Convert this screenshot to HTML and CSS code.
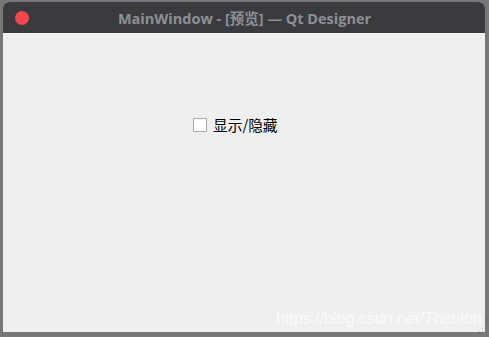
FILE: index.html
```html
<!DOCTYPE html>
<html>
<head>
<meta charset="utf-8">
<link rel="stylesheet" href="styles.css">
</head>
<body>
<div class="window">
  <div class="titlebar">
    <span class="close"></span>
    <span class="title">MainWindow - [预览] — Qt Designer</span>
  </div>
  <div class="content">
    <label class="check">
      <span class="box"></span>
      <span class="label">显示/隐藏</span>
    </label>
    <div class="watermark">https://blog.csdn.net/Thanlon</div>
    <div class="grip">
      <svg width="9" height="9" viewBox="0 0 9 9">
        <g fill="#b8b8b8">
          <rect x="7" y="1" width="1" height="1"/>
          <rect x="4" y="4" width="1" height="1"/><rect x="7" y="4" width="1" height="1"/>
          <rect x="1" y="7" width="1" height="1"/><rect x="4" y="7" width="1" height="1"/><rect x="7" y="7" width="1" height="1"/>
        </g>
      </svg>
    </div>
  </div>
</div>
</body>
</html>
```

FILE: styles.css
```css
html, body {
  margin: 0;
  padding: 0;
}
body {
  width: 489px;
  height: 337px;
  background: #777777;
  overflow: hidden;
  padding: 2px 4px 5px 3px;
  box-sizing: border-box;
}
.window {
  height: 100%;
  display: flex;
  flex-direction: column;
  border-radius: 6px 6px 0 0;
  overflow: hidden;
  background: #efefef;
}
.titlebar {
  height: 31px;
  flex: none;
  background: #3b3b3f;
  display: flex;
  align-items: center;
  justify-content: center;
  position: relative;
}
.close {
  position: absolute;
  left: 12px;
  top: 9px;
  width: 14px;
  height: 14px;
  border-radius: 50%;
  background: #f2474f;
}
.title {
  font-family: "Open Sans", "Noto Sans CJK SC", sans-serif;
  font-weight: bold;
  font-size: 14.5px;
  color: #8d9095;
  margin-left: 1px;
  margin-top: -1px;
}
.content {
  flex: 1;
  position: relative;
  padding-top: 84px;
  display: flex;
  flex-direction: column;
  align-items: flex-start;
}
.check {
  margin-left: 190px;
  display: flex;
  align-items: center;
  gap: 6px;
}
.box {
  width: 12px;
  height: 12px;
  border: 1px solid #a6a6a6;
  background: #ffffff;
  border-radius: 1px;
}
.label {
  font-family: "Noto Sans CJK SC", sans-serif;
  font-size: 14.7px;
  color: #000;
  line-height: 16px;
}
.watermark {
  position: absolute;
  right: 3px;
  bottom: 4px;
  font-family: "Liberation Sans", sans-serif;
  font-size: 16.5px;
  color: rgba(255, 255, 255, 0.7);
  letter-spacing: -0.2px;
}
.grip {
  position: absolute;
  right: 1px;
  bottom: 1px;
  width: 9px;
  height: 9px;
}
```
